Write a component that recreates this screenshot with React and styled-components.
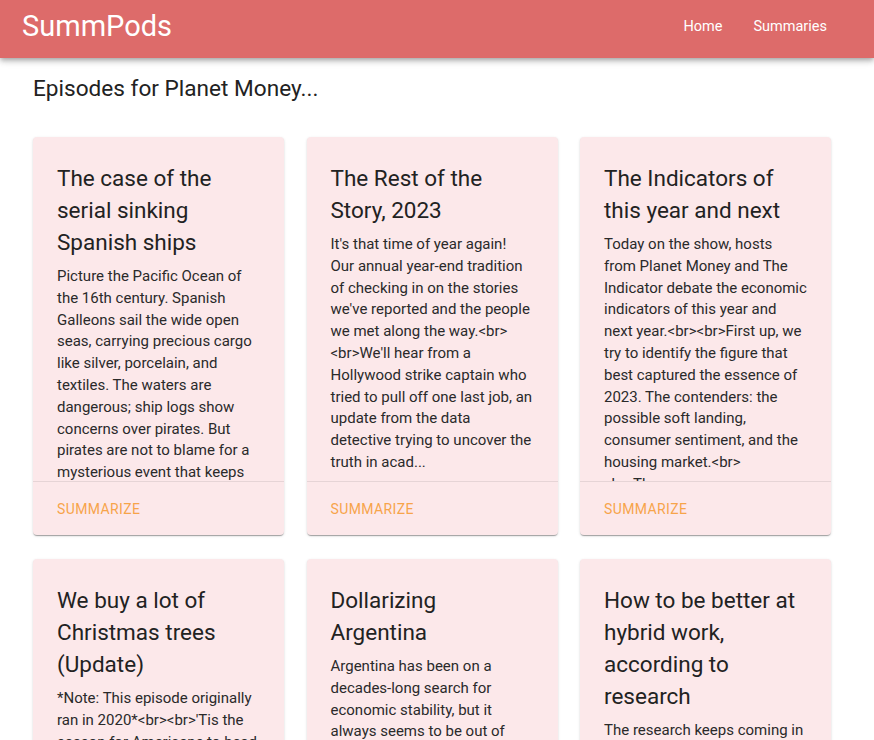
import React from 'react'
import styled, { createGlobalStyle } from 'styled-components'

const episodes = [
    {
        title: 'The case of the serial sinking Spanish ships',
        description: "Picture the Pacific Ocean of the 16th century. Spanish Galleons sail the wide open seas, carrying precious cargo like silver, porcelain, and textiles. The waters are dangerous; ship logs show concerns over pirates. But pirates are not to blame for a mysterious event that keeps happening: ships keep sinking, one after another...",
    },
    {
        title: 'The Rest of the Story, 2023',
        description: "It's that time of year again! Our annual year-end tradition of checking in on the stories we've reported and the people we met along the way.<br><br>We'll hear from a Hollywood strike captain who tried to pull off one last job, an update from the data detective trying to uncover the truth in acad...",
    },
    {
        title: 'The Indicators of this year and next',
        description: "Today on the show, hosts from Planet Money and The Indicator debate the economic indicators of this year and next year.<br><br>First up, we try to identify the figure that best captured the essence of 2023. The contenders: the possible soft landing, consumer sentiment, and the housing market.<br><br>Then...",
    },
    {
        title: 'We buy a lot of Christmas trees (Update)',
        description: "*Note: This episode originally ran in 2020*<br><br>'Tis the season for Americans to head out and buy a Christmas tree. But where do all those trees come from, and why do prices keep...",
    },
    {
        title: 'Dollarizing Argentina',
        description: "Argentina has been on a decades-long search for economic stability, but it always seems to be out of reach. Now the country's new president wants to do something radical: get rid of the peso...",
    },
    {
        title: 'How to be better at hybrid work, according to research',
        description: "The research keeps coming in on remote and hybrid work, and some of the findings may surprise you...",
    },
]

function App() {
    return (
        <>
            <GlobalStyle />
            <NavBar>
                <Logo>SummPods</Logo>
                <NavLinks>
                    <NavLink>Home</NavLink>
                    <NavLink>Summaries</NavLink>
                </NavLinks>
            </NavBar>
            <Main>
                <Heading>Episodes for Planet Money...</Heading>
                <Grid>
                    {episodes.map((ep) => (
                        <Card key={ep.title}>
                            <CardContent>
                                <Title>{ep.title}</Title>
                                <Description>{ep.description}</Description>
                            </CardContent>
                            <CardActions>
                                <SummarizeButton>Summarize</SummarizeButton>
                            </CardActions>
                        </Card>
                    ))}
                </Grid>
            </Main>
        </>
    )
}

export default App

const GlobalStyle = createGlobalStyle`
    body {
        margin: 0;
        background: #fff;
        font-family: Roboto, "Liberation Sans", Arial, sans-serif;
        color: rgba(0, 0, 0, 0.87);
    }
`

const NavBar = styled.header`
    height: 58px;
    background: #dd6b6a;
    display: flex;
    align-items: center;
    justify-content: space-between;
    padding: 0 47px 0 22px;
    box-shadow: 0 2px 4px -1px rgba(0,0,0,0.2), 0 4px 5px 0 rgba(0,0,0,0.14), 0 1px 10px 0 rgba(0,0,0,0.12);
    position: relative;
    z-index: 1;
`

const Logo = styled.div`
    color: #fff;
    font-size: 29px;
    margin-top: -6px;
`

const NavLinks = styled.nav`
    display: flex;
    gap: 31px;
    margin-top: -6px;
`

const NavLink = styled.a`
    color: #fff;
    font-size: 14.5px;
    cursor: pointer;
`

const Main = styled.main`
    padding: 16px 43px 0 33px;
`

const Heading = styled.h2`
    margin: 0 0 33px;
    font-size: 22.6px;
    font-weight: 400;
    line-height: 30px;
    color: #222;
`

const Grid = styled.div`
    display: grid;
    grid-template-columns: repeat(3, 1fr);
    column-gap: 22.5px;
    row-gap: 24px;
`

const Card = styled.div`
    background: #fce8ea;
    border-radius: 4px;
    box-shadow: 0 2px 1px -1px rgba(0,0,0,0.2), 0 1px 1px 0 rgba(0,0,0,0.14), 0 1px 3px 0 rgba(0,0,0,0.12);
    display: flex;
    flex-direction: column;
`

const CardContent = styled.div`
    height: 345px;
    box-sizing: border-box;
    padding: 25px 24px 0;
    overflow: hidden;
    border-bottom: 1px solid #e6d4d6;
`

const Title = styled.h3`
    margin: 0 0 8px;
    font-size: 22.5px;
    font-weight: 400;
    line-height: 32px;
    color: #222;
`

const Description = styled.p`
    margin: 0;
    font-size: 15px;
    line-height: 21.8px;
    color: #2a2a2a;
`

const CardActions = styled.div`
    height: 53px;
    display: flex;
    align-items: center;
    padding: 0 24px;
`

const SummarizeButton = styled.button`
    background: none;
    border: none;
    padding: 0;
    font-family: inherit;
    font-size: 14px;
    letter-spacing: 0.4px;
    text-transform: uppercase;
    color: #f7a44a;
    cursor: pointer;
`
